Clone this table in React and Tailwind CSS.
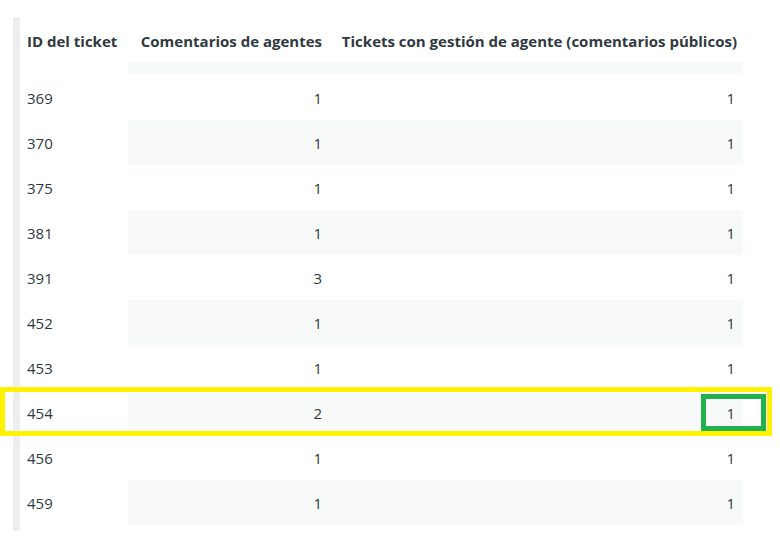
const ROWS = [
  { id: "369", comments: 1, tickets: 1 },
  { id: "370", comments: 1, tickets: 1 },
  { id: "375", comments: 1, tickets: 1 },
  { id: "381", comments: 1, tickets: 1 },
  { id: "391", comments: 3, tickets: 1 },
  { id: "452", comments: 1, tickets: 1 },
  { id: "453", comments: 1, tickets: 1 },
  { id: "454", comments: 2, tickets: 1 },
  { id: "456", comments: 1, tickets: 1 },
  { id: "459", comments: 1, tickets: 1 },
];

function Row({ row, striped }) {
  const bg = striped ? "bg-[#f8f9f9]" : "bg-white";
  return (
    <div className="flex h-[45px] items-center text-[15px] text-[#2f3941]">
      <div className="w-[108px] h-full flex items-center pl-[7px] pt-[1px] bg-white">{row.id}</div>
      <div className={`w-[208px] h-full flex items-center justify-end pr-[14px] pt-[1px] ${bg}`}>
        {row.comments}
      </div>
      <div className={`w-[407px] h-full flex items-center justify-end pr-[8px] pt-[1px] ${bg}`}>
        {row.tickets}
      </div>
    </div>
  );
}

export default function App() {
  return (
    <div
      className="relative w-[780px] h-[537px] bg-white overflow-hidden"
      style={{ fontFamily: '"Open Sans", "Noto Sans", sans-serif' }}
    >
      <div className="ml-[13px] mt-[17px] w-[730px] border-l-[7px] border-[#eeeeee] pb-[6px]">
        {/* Header */}
        <div className="flex h-[45px] items-center pt-[3px] text-[15px] font-bold text-[#2f3941]">
          <div className="w-[108px] pl-[7px] whitespace-nowrap">ID del ticket</div>
          <div className="w-[208px] pr-[14px] text-right whitespace-nowrap">
            Comentarios de agentes
          </div>
          <div className="w-[407px] pr-[6px] text-right whitespace-nowrap">
            Tickets con gestión de agente (comentarios públicos)
          </div>
        </div>
        <div className="flex h-[13px]">
          <div className="w-[108px] bg-white" />
          <div className="w-[615px] bg-[#f8f9f9]" />
        </div>
        {ROWS.map((r, i) => (
          <Row key={r.id} row={r} striped={i % 2 === 1} />
        ))}
      </div>

      {/* Highlight annotations */}
      <div className="absolute left-0 top-[387px] w-[772px] h-[49px] border-[5px] border-[#fff200]" />
      <div className="absolute left-[701px] top-[394px] w-[65px] h-[37px] border-[5px] border-[#22b14c]" />
    </div>
  );
}
